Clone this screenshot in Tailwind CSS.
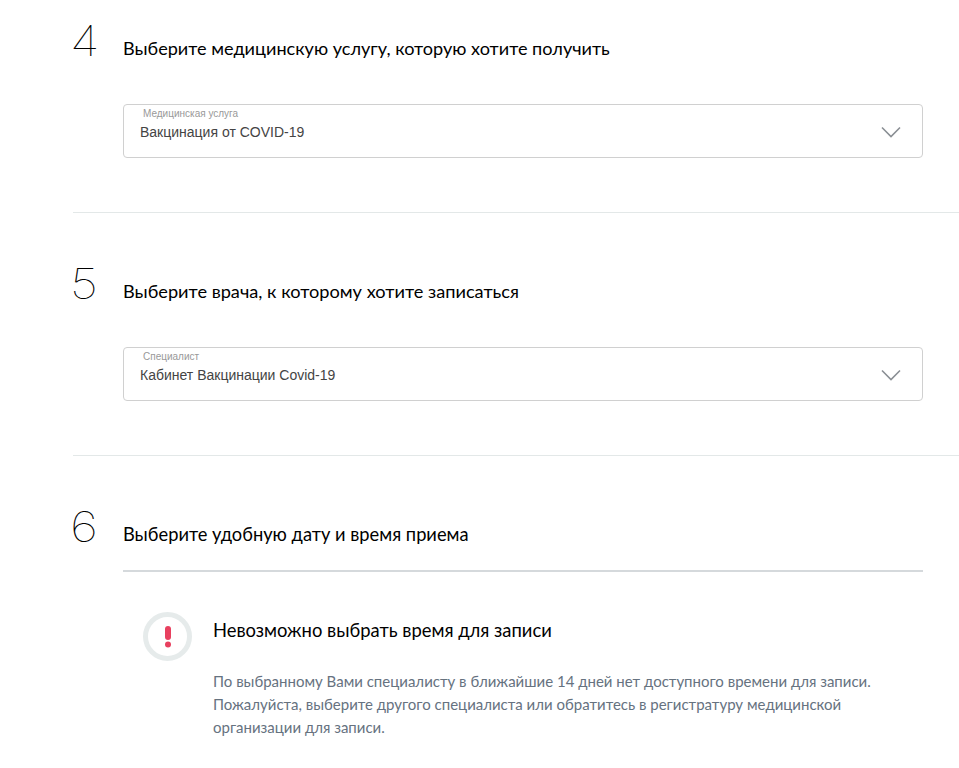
<!DOCTYPE html>
<html lang="en">
<head>
    <meta charset="UTF-8">
    <title>Запись на прием</title>
    <script src="https://cdn.jsdelivr.net/npm/@tailwindcss/browser@4"></script>
</head>
<body class="bg-white overflow-hidden h-[768px] font-['Lato',sans-serif]">
    <div class="pl-[73px] pt-[13px]">
        <!-- step 4 -->
        <section class="h-[200px] border-b border-[#e3e8e8]">
            <div class="flex items-center h-[56px]">
                <div class="w-[50px]"><span class="inline-block -ml-[3px] origin-left scale-x-[1.18] text-[42px] leading-[56px] font-thin text-black font-['Inter',sans-serif]">4</span></div>
                <h2 class="text-[18.1px] leading-[24px] text-black pt-[14px]">Выберите медицинскую услугу, которую хотите получить</h2>
            </div>
            <div class="ml-[50px] mt-[35px] w-[800px] h-[54px] border border-[#d0d0d0] rounded-[4px] flex items-start justify-between pl-[16px] pr-[21px] font-['Liberation_Sans',sans-serif]">
                <div>
                    <div class="text-[10px] leading-[12px] text-[#999999] ml-[3px] mt-[3px]">Медицинская услуга</div>
                    <div class="text-[14px] leading-[18px] text-[#444444] mt-[3px]">Вакцинация от COVID-19</div>
                </div>
                <svg class="mt-[21px]" width="20" height="12" viewBox="0 0 20 12" fill="none" stroke="#8a8f94" stroke-width="1.6"><path d="M1 1.5l9 9 9-9"/></svg>
            </div>
        </section>
        <!-- step 5 -->
        <section class="h-[243px] border-b border-[#e3e8e8] pt-[43px]">
            <div class="flex items-center h-[56px]">
                <div class="w-[50px]"><span class="inline-block -ml-[3px] origin-left scale-x-[1.18] text-[42px] leading-[56px] font-thin text-black font-['Inter',sans-serif]">5</span></div>
                <h2 class="text-[18.2px] leading-[24px] text-black pt-[14px]">Выберите врача, к которому хотите записаться</h2>
            </div>
            <div class="ml-[50px] mt-[35px] w-[800px] h-[54px] border border-[#d0d0d0] rounded-[4px] flex items-start justify-between pl-[16px] pr-[21px] font-['Liberation_Sans',sans-serif]">
                <div>
                    <div class="text-[10px] leading-[12px] text-[#999999] ml-[3px] mt-[3px]">Специалист</div>
                    <div class="text-[14px] leading-[18px] text-[#444444] mt-[3px]">Кабинет Вакцинации Covid-19</div>
                </div>
                <svg class="mt-[21px]" width="20" height="12" viewBox="0 0 20 12" fill="none" stroke="#8a8f94" stroke-width="1.6"><path d="M1 1.5l9 9 9-9"/></svg>
            </div>
        </section>
        <!-- step 6 -->
        <section class="pt-[43px]">
            <div class="flex items-center h-[56px]">
                <div class="w-[50px]"><span class="inline-block -ml-[3px] origin-left scale-x-[1.18] text-[42px] leading-[56px] font-thin text-black font-['Inter',sans-serif]">6</span></div>
                <h2 class="text-[18.3px] leading-[24px] text-black pt-[14px]">Выберите удобную дату и время приема</h2>
            </div>
            <div class="ml-[50px] mt-[15px] w-[800px] border-t-2 border-[#d5d9dc] pt-[40px] pl-[20px] flex gap-[21px]">
                <div class="w-[49px] h-[49px] rounded-full border-[5px] border-[#e6ebeb] flex items-center justify-center shrink-0">
                    <svg width="8" height="22" viewBox="0 0 8 22" fill="#e8405f"><rect x="1" y="0" width="6" height="14" rx="3"/><circle cx="4" cy="18.5" r="3"/></svg>
                </div>
                <div>
                    <h3 class="text-[18.4px] leading-[24px] text-black mt-[6px]">Невозможно выбрать время для записи</h3>
                    <p class="text-[15px] leading-[23px] text-[#66727f] mt-[28px] w-[690px]">По выбранному Вами специалисту в ближайшие 14 дней нет доступного времени для записи.<br>Пожалуйста, выберите другого специалиста или обратитесь в регистратуру медицинской организации для записи.</p>
                </div>
            </div>
        </section>
    </div>
</body>
</html>
